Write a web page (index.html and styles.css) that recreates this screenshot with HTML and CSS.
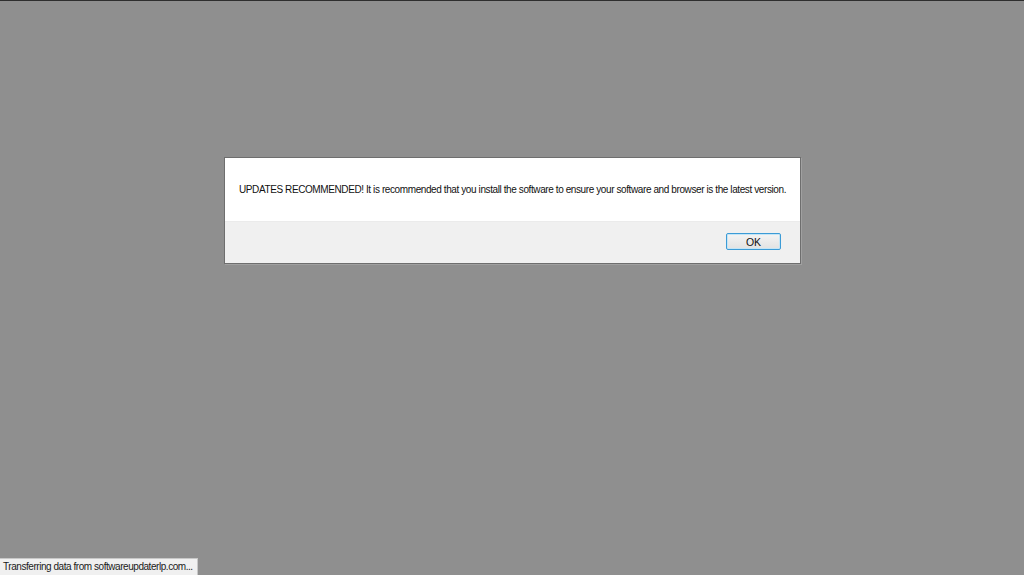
FILE: index.html
```html
<!DOCTYPE html>
<html>
<head>
<meta charset="utf-8">
<link rel="stylesheet" href="styles.css">
</head>
<body>
<div class="page">
  <div class="dialog">
    <div class="msg">UPDATES RECOMMENDED! It is recommended that you install the software to ensure your software and browser is the latest version.</div>
    <div class="footer"><button class="ok">OK</button></div>
  </div>
</div>
<div class="status">Transferring data from softwareupdaterlp.com...</div>
</body>
</html>
```
FILE: styles.css
```css
html, body { margin: 0; padding: 0; }
body {
  width: 1024px;
  height: 575px;
  background: #8f8f8f;
  overflow: hidden;
  position: relative;
  font-family: "Liberation Sans", Arial, sans-serif;
}
.page {
  border-top: 1px solid #2e2e2e;
  padding-top: 156px;
  padding-left: 224px;
}
.dialog {
  width: 575px;
  border: 1px solid #6e6e6e;
  background: #ffffff;
  box-shadow: 1px 1px 0 #a0a0a0;
}
.msg {
  height: 63px;
  padding-left: 14px;
  display: flex;
  align-items: center;
  font-size: 10px;
  color: #111;
  letter-spacing: -0.4px;
  white-space: nowrap;
  box-sizing: border-box;
  padding-bottom: 1px;
}
.footer {
  height: 42px;
  background: #f0f0f0;
  border-top: 1px solid #ebebeb;
  display: flex;
  justify-content: flex-end;
  align-items: flex-start;
  padding-right: 19px;
  box-sizing: border-box;
  padding-top: 11px;
}
.ok {
  width: 55px;
  height: 17px;
  border: 1px solid #3c9bd6;
  border-radius: 2px;
  background: linear-gradient(#f4f4f4, #e2e2e2);
  font-family: "Liberation Sans", Arial, sans-serif;
  font-size: 10.5px;
  color: #111;
  padding: 0;
  box-shadow: inset 0 0 0 1px #c4e5f6;
}
.status {
  position: absolute;
  left: 0;
  bottom: 0;
  width: 198px;
  height: 17px;
  background: #f0f0f0;
  border-top: 1px solid #c8c8c8;
  border-right: 1px solid #c8c8c8;
  font-family: "Liberation Sans", Arial, sans-serif;
  font-size: 10px;
  letter-spacing: -0.45px;
  line-height: 16px;
  padding-left: 3px;
  box-sizing: border-box;
  color: #1a1a1a;
  white-space: nowrap;
  overflow: hidden;
}
```
